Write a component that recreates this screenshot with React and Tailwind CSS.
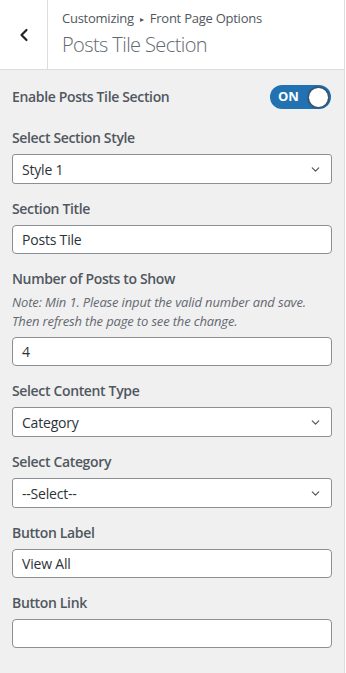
import { ChevronLeft, ChevronDown } from "lucide-react";

const font = { fontFamily: '"Open Sans", "Noto Sans", sans-serif' };

function Label({ children }) {
  return (
    <div className="text-[14px] leading-[20px] font-semibold tracking-[-0.35px] text-[#50575e]">
      {children}
    </div>
  );
}

function TextBox({ value }) {
  return (
    <div className="mt-[6px] h-[29px] rounded-[4px] border border-[#8c8f94] bg-white px-[9px] flex items-center text-[14px] tracking-[-0.2px] text-[#2c3338]">
      {value}
    </div>
  );
}

function SelectBox({ value }) {
  return (
    <div className="mt-[6px] h-[30px] rounded-[3px] border border-[#8c8f94] bg-white pl-[9px] pr-[9px] flex items-center justify-between text-[14px] tracking-[-0.2px] text-[#2c3338]">
      <span>{value}</span>
      <ChevronDown className="w-[13px] h-[13px] text-[#50575e]" strokeWidth={2.2} />
    </div>
  );
}

export default function App() {
  return (
    <div className="min-h-screen bg-white" style={font}>
      <div className="w-[345px] min-h-[673px] border-r border-[#dcdcde] bg-[#f0f0f1]">
        <div className="h-[70px] bg-white border-b border-[#dcdcde] flex">
          <div className="w-[48px] border-r border-[#dcdcde] flex items-center justify-center">
            <ChevronLeft className="w-[20px] h-[20px] text-[#1d2327]" strokeWidth={2.6} />
          </div>
          <div className="pl-[14px] pt-[8px]">
            <div className="text-[13px] leading-[20px] tracking-[-0.25px] text-[#50575e]">
              Customizing <span className="text-[8px] align-[1px] mx-[3px]">▸</span> Front Page Options
            </div>
            <div className="text-[20px] leading-[30px] font-light tracking-[-0.6px] text-[#646970] mt-[1px]">
              Posts Tile Section
            </div>
          </div>
        </div>

        <div className="px-[12px] pt-[15px] pb-[20px]">
          <div className="flex items-center justify-between h-[24px]">
            <Label>Enable Posts Tile Section</Label>
            <div className="w-[61px] h-[24px] mr-[1px] rounded-full bg-[#2271b1] flex items-center justify-between pl-[8px] pr-[2px]">
              <span className="text-[13px] font-bold text-white">ON</span>
              <span className="w-[21px] h-[21px] rounded-full bg-white border border-[#3c434a] shadow-[0_0_2px_rgba(0,0,0,0.4)]" />
            </div>
          </div>

          <div className="mt-[19px]">
            <Label>Select Section Style</Label>
            <SelectBox value="Style 1" />
          </div>

          <div className="mt-[15px]">
            <Label>Section Title</Label>
            <TextBox value="Posts Tile" />
          </div>

          <div className="mt-[15px]">
            <Label>Number of Posts to Show</Label>
            <div className="mt-[4px] text-[13px] leading-[19px] italic tracking-[-0.15px] text-[#646970]">
              Note: Min 1. Please input the valid number and save. Then refresh the page to see the change.
            </div>
            <TextBox value="4" />
          </div>

          <div className="mt-[15px]">
            <Label>Select Content Type</Label>
            <SelectBox value="Category" />
          </div>

          <div className="mt-[15px]">
            <Label>Select Category</Label>
            <SelectBox value="--Select--" />
          </div>

          <div className="mt-[15px]">
            <Label>Button Label</Label>
            <TextBox value="View All" />
          </div>

          <div className="mt-[15px]">
            <Label>Button Link</Label>
            <TextBox value="" />
          </div>
        </div>
      </div>
    </div>
  );
}
